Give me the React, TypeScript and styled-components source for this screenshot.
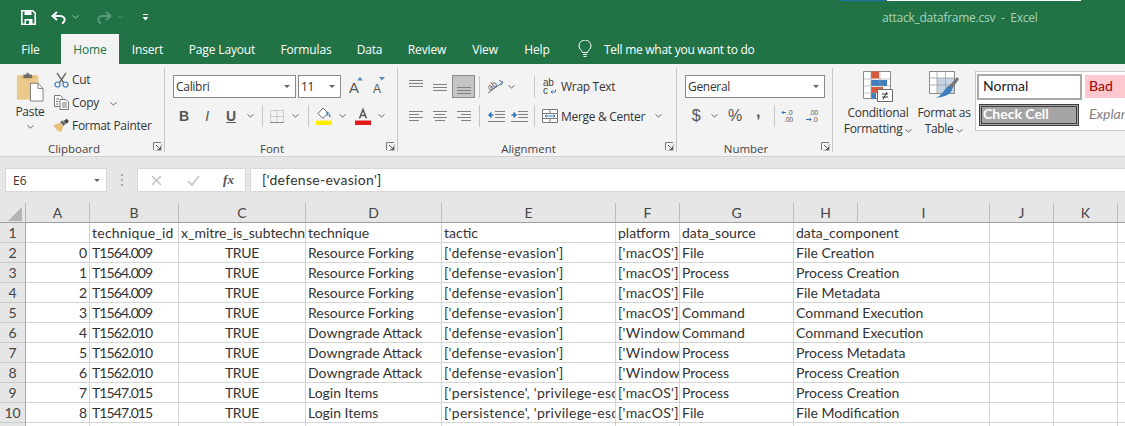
import React from 'react';
import styled, { createGlobalStyle } from 'styled-components';

const UI_FONT = '"Open Sans", "Noto Sans", sans-serif';
const CELL_FONT = 'Lato, "Liberation Sans", sans-serif';

const GlobalStyle = createGlobalStyle`
  html, body { margin: 0; padding: 0; background: #fff; }
  body { font-family: ${UI_FONT}; }
`;

const Page = styled.div`
  width: 1125px;
  height: 426px;
  overflow: hidden;
  display: flex;
  flex-direction: column;
`;

/* title bar */
const TitleBar = styled.div`
  position: relative;
  height: 34px;
  flex: none;
  background: #217346;
  display: flex;
  align-items: center;
`;

const Qat = styled.div`
  display: flex;
  align-items: center;
  width: 882px;
  padding-left: 21px;
  box-sizing: border-box;
`;

const QatSlot = styled.div<{ $w: number }>`
  width: ${(p) => p.$w}px;
  display: flex;
  align-items: center;
  justify-content: center;
`;

const WindowTitle = styled.div`
  color: #a8d4bb;
  font-size: 12px;
  letter-spacing: -0.25px;
  white-space: pre;
`;

const TopStrip = styled.div`
  position: absolute;
  left: 840px;
  top: 0;
  width: 241px;
  height: 1px;
  background: linear-gradient(to right, #1d6fa8 0 47px, #fff 47px);
`;

/* tabs */
const TabBar = styled.div`
  height: 30px;
  flex: none;
  background: #217346;
  display: flex;
  align-items: stretch;
  letter-spacing: -0.15px;
`;

const Tab = styled.div<{ $w: number; $active?: boolean }>`
  width: ${(p) => p.$w}px;
  display: flex;
  align-items: center;
  justify-content: center;
  font-size: 12px;
  color: ${(p) => (p.$active ? '#217346' : '#fff')};
  background: ${(p) => (p.$active ? '#f3f3f3' : 'transparent')};
`;

const TellMe = styled.div`
  display: flex;
  align-items: center;
  gap: 12px;
  margin-left: 15px;
  color: #fff;
  font-size: 12px;
  letter-spacing: -0.27px;
`;

/* ribbon */
const Ribbon = styled.div`
  height: 93px;
  flex: none;
  box-sizing: border-box;
  background: #f3f3f3;
  border-bottom: 1px solid #d2d2d2;
  display: flex;
  align-items: flex-start;
  overflow: hidden;
  font-size: 12px;
  letter-spacing: -0.3px;
  color: #333;
`;

const Group = styled.div<{ $w: number; $last?: boolean }>`
  position: relative;
  flex: none;
  width: ${(p) => p.$w}px;
  height: 84px;
  margin-top: 4px;
  box-sizing: border-box;
  border-right: ${(p) => (p.$last ? 'none' : '1px solid #c6c6c6')};
  display: flex;
  flex-direction: column;
`;

const GroupBody = styled.div<{ $left: number }>`
  height: 73px;
  box-sizing: border-box;
  padding: 7px 0 0 ${(p) => p.$left}px;
  display: flex;
  flex-direction: column;
`;

const ClipboardBody = styled.div`
  height: 73px;
  box-sizing: border-box;
  padding-left: 8px;
  display: flex;
  align-items: flex-start;
`;

const GroupLabel = styled.div<{ $w: number }>`
  height: 11px;
  line-height: 15px;
  text-align: center;
  font-size: 11.5px;
  letter-spacing: 0;
  color: #444;
  width: ${(p) => p.$w}px;
`;

const Launcher = styled.div`
  position: absolute;
  right: 2px;
  bottom: 1px;
  width: 9px;
  height: 9px;
  display: flex;
`;

const Row = styled.div<{ $top?: number }>`
  display: flex;
  align-items: center;
  height: ${(p) => (p.$top ? 22 : 23)}px;
  margin-top: ${(p) => p.$top ?? 0}px;
`;

const Slot = styled.div<{ $w: number; $active?: boolean }>`
  flex: none;
  width: ${(p) => p.$w}px;
  height: 100%;
  display: flex;
  align-items: center;
  justify-content: center;
  box-sizing: border-box;
  background: ${(p) => (p.$active ? '#c4c4c4' : 'transparent')};
  border: ${(p) => (p.$active ? '1px solid #8c8c8c' : 'none')};
`;

const Glyph = styled.span<{ $size: number; $bold?: boolean; $italic?: boolean; $under?: boolean; $lift?: number }>`
  font-family: "Liberation Sans", sans-serif;
  font-size: ${(p) => p.$size}px;
  font-weight: ${(p) => (p.$bold ? 700 : 400)};
  font-style: ${(p) => (p.$italic ? 'italic' : 'normal')};
  text-decoration: ${(p) => (p.$under ? 'underline' : 'none')};
  color: #555;
  line-height: 1;
  transform: translateY(${(p) => -(p.$lift ?? 0)}px);
`;

const FontSizeButton = styled.div`
  flex: none;
  width: 16px;
  height: 100%;
  display: flex;
  align-items: flex-end;
  padding-bottom: 3px;
  box-sizing: border-box;
`;

const FontSizeArrow = styled.svg`
  flex: none;
  align-self: flex-start;
  margin: 2px 0 0 -2px;
`;

const Divider = styled.div<{ $l: number; $r: number; $h?: number }>`
  flex: none;
  width: 1px;
  height: ${(p) => p.$h ?? 22}px;
  margin: 0 ${(p) => p.$r}px 0 ${(p) => p.$l}px;
  background: #c6c6c6;
`;

const Combo = styled.div<{ $w: number }>`
  flex: none;
  width: ${(p) => p.$w}px;
  height: 23px;
  box-sizing: border-box;
  border: 1px solid #8a8a8a;
  background: #fff;
  display: flex;
  align-items: center;
  justify-content: space-between;
  padding: 0 5px 0 2px;
  font-size: 12px;
  color: #333;
`;

const Caret = styled.span`
  width: 0;
  height: 0;
  border-left: 3px solid transparent;
  border-right: 3px solid transparent;
  border-top: 3px solid #666;
`;

const PasteButton = styled.div`
  flex: none;
  width: 44px;
  display: flex;
  flex-direction: column;
  align-items: center;
  padding-top: 4px;
`;

const PasteText = styled.div`
  margin: 1px 0 5px;
  line-height: 16px;
`;

const Commands = styled.div`
  display: flex;
  flex-direction: column;
  margin-left: 1px;
`;

const Command = styled.div`
  height: 23px;
  display: flex;
  align-items: center;
  white-space: nowrap;
`;

const CommandIcon = styled.div`
  width: 16px;
  margin-right: 3px;
  display: flex;
  justify-content: center;
`;

const ChevronBox = styled.span<{ $l: number }>`
  display: inline-flex;
  margin-left: ${(p) => p.$l}px;
`;

const CopyChevron = styled(ChevronBox)`
  transform: translateY(1px);
`;

const TextCommand = styled.span`
  margin-left: 3px;
  white-space: nowrap;
`;

const StyleRow = styled.div`
  display: flex;
  align-items: flex-start;
  height: 100%;
`;

const BigButton = styled.div<{ $w: number; $l: number }>`
  flex: none;
  width: ${(p) => p.$w}px;
  margin-left: ${(p) => p.$l}px;
  display: flex;
  flex-direction: column;
  align-items: center;
  padding-top: 3px;
  white-space: nowrap;
  line-height: 16px;
`;

const BigIcon = styled.div`
  height: 33px;
  margin-bottom: 1px;
`;

const Gallery = styled.div`
  flex: none;
  width: 170px;
  height: 60px;
  margin: 3px 0 0 5px;
  box-sizing: border-box;
  background: #fff;
  border: 1px solid #c8c8c8;
  display: grid;
  grid-template-columns: 109px 1fr;
  grid-template-rows: 29px 29px;
  font-family: ${CELL_FONT};
  font-size: 14px;
  letter-spacing: 0;
`;

const NormalStyle = styled.div`
  margin: 2px 3px 1px 1px;
  box-sizing: border-box;
  border: 2px solid #a8a8a8;
  padding: 0 0 3px 4px;
  display: flex;
  align-items: center;
  color: #222;
`;

const BadStyle = styled.div`
  margin: 3px 0;
  background: #ffc7ce;
  color: #9c0006;
  padding: 0 0 2px 4px;
  display: flex;
  align-items: center;
`;

const CheckStyle = styled.div`
  margin: 3px 6px 4px 3px;
  background: #a5a5a5;
  border: 3px double #3f3f3f;
  color: #fff;
  font-weight: 700;
  padding: 0 0 3px 1px;
  display: flex;
  align-items: center;
`;

const ExplainStyle = styled.div`
  color: #7f7f7f;
  font-style: italic;
  padding: 0 0 4px 4px;
  display: flex;
  align-items: center;
`;

/* formula bar */
const FormulaBar = styled.div`
  height: 46px;
  flex: none;
  box-sizing: border-box;
  background: #e6e6e6;
  padding: 11px 0 0 5px;
  display: flex;
  align-items: flex-start;
`;

const WhiteBox = styled.div<{ $w?: number }>`
  height: 24px;
  box-sizing: border-box;
  background: #fff;
  border: 1px solid #d8d8d8;
  display: flex;
  align-items: center;
  flex: ${(p) => (p.$w ? 'none' : 1)};
  width: ${(p) => (p.$w ? `${p.$w}px` : 'auto')};
`;

const NameBox = styled(WhiteBox)`
  justify-content: space-between;
  padding: 0 6px 0 7px;
  font-family: ${UI_FONT};
  font-size: 12px;
  color: #333;
`;

const Grip = styled.div`
  flex: none;
  width: 30px;
  display: flex;
  flex-direction: column;
  align-items: center;
  gap: 3px;
  padding-top: 6px;
`;

const GripDot = styled.span`
  width: 2px;
  height: 2px;
  background: #a8a8a8;
`;

const FormulaButtons = styled(WhiteBox)`
  margin-right: 4px;
`;

const FormulaSlot = styled.div<{ $w: number }>`
  width: ${(p) => p.$w}px;
  display: flex;
  justify-content: center;
  align-items: center;
`;

const Fx = styled.span`
  font-family: "Liberation Serif", serif;
  font-style: italic;
  font-weight: 700;
  font-size: 13px;
  color: #555;
`;

const FormulaInput = styled(WhiteBox)`
  padding: 0 0 2px 11px;
  font-family: ${CELL_FONT};
  font-size: 14px;
  letter-spacing: 0.3px;
  color: #333;
  border-right: none;
`;

/* sheet */
const COLUMNS = [26, 64, 89, 127, 136, 174, 64, 114, 64, 132, 64, 64, 64];

const Sheet = styled.div`
  display: grid;
  grid-template-columns: ${COLUMNS.map((c) => `${c}px`).join(' ')};
  grid-auto-rows: 20px;
  font-family: ${CELL_FONT};
  font-size: 14px;
  color: #333;
  background: #fff;
`;

const Corner = styled.div`
  background: #e6e6e6;
  border-right: 1px solid #b4b4b4;
  border-bottom: 1px solid #a0a0a0;
  box-sizing: border-box;
  display: flex;
  align-items: flex-end;
  justify-content: flex-end;
  padding: 0 3px 1px 0;
`;

const ColHead = styled.div`
  background: #e6e6e6;
  border-right: 1px solid #bcbcbc;
  border-bottom: 1px solid #a0a0a0;
  box-sizing: border-box;
  text-align: center;
  line-height: 19px;
  color: #444;
`;

const RowHead = styled.div`
  background: #e6e6e6;
  border-right: 1px solid #a8a8a8;
  border-bottom: 1px solid #c8c8c8;
  box-sizing: border-box;
  text-align: center;
  line-height: 19px;
  color: #444;
`;

const Cell = styled.div<{ $align: string; $open?: boolean; $track: number }>`
  box-sizing: border-box;
  border-right: ${(p) => (p.$open ? 'none' : '1px solid #d4d4d4')};
  border-bottom: 1px solid #d4d4d4;
  padding: 0 2px;
  line-height: 19px;
  white-space: nowrap;
  overflow: ${(p) => (p.$open ? 'visible' : 'hidden')};
  text-align: ${(p) => p.$align};
  letter-spacing: ${(p) => p.$track}px;
`;

/* icons */
const Chevron = ({ color = '#666' }: { color?: string }) => (
  <svg width="7" height="4" viewBox="0 0 7 4">
    <path d="M.5.5 3.5 3 6.5.5" fill="none" stroke={color} strokeWidth="1" />
  </svg>
);

const SaveIcon = () => (
  <svg width="15" height="15" viewBox="0 0 15 15">
    <path d="M.8.8h11l2.4 2.4v11H.8z" fill="none" stroke="#fff" strokeWidth="1.6" />
    <path d="M3.5 1v4h7V1zM3.5 9h8v5h-8z" fill="#fff" />
    <path d="M5 10.5h3v3.5h-3z" fill="#217346" />
  </svg>
);

const UndoIcon = ({ color }: { color: string }) => (
  <svg width="15" height="13" viewBox="0 0 15 13">
    <path d="M6 1 1.5 5 6 9" fill="none" stroke={color} strokeWidth="2" />
    <path d="M2 5h7c4 0 5 2.500 4.500 4.500C13 11 12 12 11 12.500" fill="none" stroke={color} strokeWidth="2" />
  </svg>
);

const RedoIcon = ({ color }: { color: string }) => (
  <svg width="15" height="13" viewBox="0 0 15 13">
    <path d="M9 1l4.500 4L9 9" fill="none" stroke={color} strokeWidth="2" />
    <path d="M13 5H6C2 5 1 7.500 1.500 9.500 2 11 3 12 4 12.500" fill="none" stroke={color} strokeWidth="2" />
  </svg>
);

const CustomizeIcon = () => (
  <svg width="7" height="7" viewBox="0 0 7 7">
    <path d="M1 0h5v1H1z" fill="#fff" />
    <path d="M.5 3h6L3.500 6.500z" fill="#fff" />
  </svg>
);

const BulbIcon = () => (
  <svg width="14" height="18" viewBox="0 0 14 18">
    <path d="M4.500 12.500C4 10 1 9 1 6a6 6 0 0 1 12 0c0 3-3 4-3.500 6.500z" fill="none" stroke="#fff" />
    <path d="M5 14.500h4M5.500 16.500h3" stroke="#fff" />
  </svg>
);

const PasteIcon = () => (
  <svg width="28" height="31" viewBox="0 0 30 32">
    <path d="M1 3h23v26H1z" fill="#eac98a" />
    <path d="M8 2h3c0-2.500 3-2.500 3 0h3v4H8z" fill="#6b6b6b" />
    <path d="M4 3.500h3v3h11v-3h3" fill="none" stroke="#dcb26a" />
    <path d="M15.500 11.500h8l5.500 5.500v13.500H15.500z" fill="#fff" stroke="#7a7a7a" />
    <path d="M23.500 11.500V17H29" fill="none" stroke="#7a7a7a" />
  </svg>
);

const CutIcon = () => (
  <svg width="15" height="16" viewBox="0 0 15 16">
    <path d="M3 1l6.500 9.500M12 1 5.500 10.500" stroke="#6d6d6d" strokeWidth="1.400" fill="none" />
    <circle cx="3.500" cy="12.500" r="2.500" fill="none" stroke="#3f7fbf" strokeWidth="1.200" />
    <circle cx="11.500" cy="12.500" r="2.500" fill="none" stroke="#3f7fbf" strokeWidth="1.200" />
  </svg>
);

const CopyIcon = () => (
  <svg width="15" height="15" viewBox="0 0 15 15">
    <path d="M.5.5h6l2 2v9h-8z" fill="#fff" stroke="#777" />
    <path d="M6 4.500h6l2.500 2.500v7.500H6z" fill="#fff" stroke="#777" />
    <path d="M2 4h3M2 6.500h2.500M2 9h2.500M8 8h5M8 10h5M8 12h5" stroke="#777" />
  </svg>
);

const PainterIcon = () => (
  <svg width="18" height="15" viewBox="0 0 18 15">
    <path d="M0 7.500 5 13l4.500 2 2-6.500-4-4z" fill="#e8c27c" />
    <path d="M8 4l4 4 2.500-2.500-4-4z" fill="#6a6a6a" />
    <path d="M12 2.500 15.500 0 18 3l-3 2.500z" fill="#444" />
  </svg>
);

const LauncherIcon = () => (
  <svg width="9" height="9" viewBox="0 0 9 9">
    <path d="M.5 8V.5H8" fill="none" stroke="#7a7a7a" />
    <path d="M3 3l4 4M7.500 4.500v3h-3" fill="none" stroke="#555" />
    <path d="M2 8.500h6.500V2" fill="none" stroke="#bbb" />
  </svg>
);

const FontSizeIcon = ({ up }: { up: boolean }) => (
  <FontSizeButton>
    <Glyph $size={up ? 15 : 12}>A</Glyph>
    <FontSizeArrow width="6" height="4" viewBox="0 0 6 4">
      <path d={up ? 'M0 3.500 3 0l3 3.500z' : 'M0 0h6L3 3.500z'} fill="#5a8bbf" />
    </FontSizeArrow>
  </FontSizeButton>
);

const BordersIcon = () => (
  <svg width="14" height="13" viewBox="0 0 14 13">
    <path d="M.5.500h13v12h-13zM7 .5v12M.5 6.500h13" fill="none" stroke="#a8a8a8" strokeDasharray="1 1" />
    <path d="M0 12.500h14" stroke="#888" />
  </svg>
);

const FillIcon = () => (
  <svg width="16" height="18" viewBox="0 0 16 18">
    <path d="M7 1 2 6.500l5 5 5-5.500z" fill="#fff" stroke="#666" />
    <path d="M13 6c1 2 2 3 1.500 4s-2.500 0-1.500-4z" fill="#4c7fb8" />
    <path d="M10 4l3 2-2 3z" fill="#4c7fb8" />
    <path d="M0 13.500h16V18H0z" fill="#ffee00" />
  </svg>
);

const FontColorIcon = () => (
  <svg width="16" height="17" viewBox="0 0 16 17">
    <path d="M4.500 10.500 8 1.500l3.500 9M5.700 7.500h4.600" fill="none" stroke="#555" strokeWidth="1.500" />
    <path d="M0 12.500h16V17H0z" fill="#e31b1b" />
  </svg>
);

const Lines = ({ kind }: { kind: 'left' | 'center' | 'right' }) => {
  const rows = [0, 3, 6, 9];
  const span = (i: number) => {
    const short = i % 2 === 1 ? 10 : 14;
    if (kind === 'left') return [0, short];
    if (kind === 'right') return [14 - short, 14];
    return [(14 - short) / 2, (14 + short) / 2];
  };
  return (
    <svg width="14" height="11" viewBox="0 0 14 11">
      {rows.map((r, i) => (
        <path key={r} d={`M${span(i)[0]} ${r + 0.5}H${span(i)[1]}`} stroke="#808080" />
      ))}
    </svg>
  );
};

const VAlignIcon = ({ top }: { top: number }) => (
  <svg width="14" height="14" viewBox="0 0 14 14">
    {[0, 3, 6].map((r) => (
      <path key={r} d={`M0 ${top + r + 0.5}H14`} stroke="#808080" />
    ))}
  </svg>
);

const OrientationIcon = () => (
  <svg width="17" height="15" viewBox="0 0 17 15" overflow="visible">
    <path d="M1 14 16 3" stroke="#707070" />
    <path d="M12 1.500l4 1.500-2 3.500" fill="none" stroke="#4c7fb8" />
    <text x="1" y="10" fontSize="9" fontFamily="Liberation Sans, sans-serif" fill="#555" transform="rotate(-35 5 8)">ab</text>
  </svg>
);

const IndentIcon = ({ out }: { out: boolean }) => (
  <svg width="17" height="13" viewBox="0 0 17 13">
    <path d="M7 1.500h10M7 4.500h10M7 7.500h10M0 11.500h17" stroke="#808080" />
    <path d={out ? 'M5.500 5H1.500M3.500 2.500 1 5l2.500 2.500' : 'M.5 5h4M2.500 2.500 5 5 2.500 7.500'} fill="none" stroke="#2f73b8" strokeWidth="1.500" />
  </svg>
);

const WrapIcon = () => (
  <svg width="14" height="17" viewBox="0 0 14 17" overflow="visible">
    <text x="0" y="8" fontSize="10" fontFamily="Liberation Sans, sans-serif" fill="#444">ab</text>
    <text x="0" y="16" fontSize="10" fontFamily="Liberation Sans, sans-serif" fill="#444">c</text>
    <path d="M12.500 11.500v2.500H8M9.500 12.500 8 14l1.500 1.500" fill="none" stroke="#2f73b8" />
  </svg>
);

const MergeIcon = () => (
  <svg width="16" height="14" viewBox="0 0 16 14">
    <path d="M.5.500h15v13H.5zM.5 4.500h15M.5 9.500h15M8 .5v4M8 9.500v4" fill="#fff" stroke="#7a7a7a" />
    <path d="M3 7h10M4.500 5.500 3 7l1.500 1.500M11.500 5.500 13 7l-1.500 1.500" fill="none" stroke="#2f73b8" />
  </svg>
);

const DecimalIcon = ({ more }: { more: boolean }) => (
  <svg width="16" height="14" viewBox="0 0 16 14" overflow="visible">
    <text x={more ? 6 : 4} y="6" fontSize="7" fontFamily="Liberation Sans, sans-serif" fill="#555">{more ? '.0' : '.00'}</text>
    <text x={more ? 3 : 7} y="13" fontSize="7" fontFamily="Liberation Sans, sans-serif" fill="#555">{more ? '.00' : '.0'}</text>
    <path d={more ? 'M5 3.500H1M2.500 2 1 3.500 2.500 5' : 'M1 10.500h5M4.500 9 6 10.500 4.500 12'} fill="none" stroke="#2f73b8" />
  </svg>
);

const CondFormatIcon = () => (
  <svg width="30" height="31" viewBox="0 0 30 31">
    <path d="M.5.500h27v27H.5z" fill="#fff" stroke="#8a8a8a" />
    <path d="M8 .5h8v7H8z" fill="#d9583b" />
    <path d="M8 9h16v6H8z" fill="#3f7fbf" />
    <path d="M8 16h12v6H8z" fill="#d9583b" />
    <path d="M8 22h5v6H8z" fill="#3f7fbf" />
    <path d="M8 .5v27M17 .5v27M.5 8h27M.5 15h27M.5 22h27" stroke="#a0a0a0" fill="none" strokeWidth=".6" />
    <path d="M14.500 18.500h15v12h-15z" fill="#fff" stroke="#6a6a6a" />
    <path d="M19 23h6M19 26h6M24 21l-4 7.500" stroke="#333" fill="none" />
  </svg>
);

const FormatTableIcon = () => (
  <svg width="30" height="31" viewBox="0 0 30 31">
    <path d="M.5.500h25v22H.5z" fill="#fff" stroke="#8a8a8a" />
    <path d="M8 7h17v15H8z" fill="#c8d4e4" />
    <path d="M.5 7h25M.5 14h25M8 .5v22M16.500 .5v22" stroke="#a0a0a0" fill="none" strokeWidth=".8" />
    <path d="M20 15 28 6l2 2-7 10z" fill="#777" />
    <path d="M19 15c3 0 5 2 4 4 -2 5-8 7-16 8 6-3 8-8 12-12z" fill="#3f7fbf" />
  </svg>
);

const CrossIcon = () => (
  <svg width="11" height="11" viewBox="0 0 11 11">
    <path d="M1 1l9 9M10 1l-9 9" stroke="#c4c4c4" strokeWidth="1.600" />
  </svg>
);

const CheckIcon = () => (
  <svg width="13" height="11" viewBox="0 0 13 11">
    <path d="M1 6l4 4 7-9" stroke="#c4c4c4" strokeWidth="1.600" fill="none" />
  </svg>
);

const CornerTriangle = () => (
  <svg width="14" height="14" viewBox="0 0 14 14">
    <path d="M14 0v14H0z" fill="#b4b4b4" />
  </svg>
);

const TABS: [string, number, boolean?][] = [
  ['File', 61],
  ['Home', 58, true],
  ['Insert', 57],
  ['Page Layout', 92],
  ['Formulas', 76],
  ['Data', 51],
  ['Review', 64],
  ['View', 52],
  ['Help', 52],
];

const HEADS = ['A', 'B', 'C', 'D', 'E', 'F', 'G', 'H', 'I', 'J', 'K', 'L'];

const DE = "['defense-evasion']";
const PE = "['persistence', 'privilege-esc";
const MAC = "['macOS']";
const WIN = "['Window";

const ROWS: string[][] = [
  ['', 'technique_id', 'x_mitre_is_subtechni', 'technique', 'tactic', 'platform', 'data_source', 'data_component'],
  ['0', 'T1564.009', 'TRUE', 'Resource Forking', DE, MAC, 'File', 'File Creation'],
  ['1', 'T1564.009', 'TRUE', 'Resource Forking', DE, MAC, 'Process', 'Process Creation'],
  ['2', 'T1564.009', 'TRUE', 'Resource Forking', DE, MAC, 'File', 'File Metadata'],
  ['3', 'T1564.009', 'TRUE', 'Resource Forking', DE, MAC, 'Command', 'Command Execution'],
  ['4', 'T1562.010', 'TRUE', 'Downgrade Attack', DE, WIN, 'Command', 'Command Execution'],
  ['5', 'T1562.010', 'TRUE', 'Downgrade Attack', DE, WIN, 'Process', 'Process Metadata'],
  ['6', 'T1562.010', 'TRUE', 'Downgrade Attack', DE, WIN, 'Process', 'Process Creation'],
  ['7', 'T1547.015', 'TRUE', 'Login Items', PE, MAC, 'Process', 'Process Creation'],
  ['8', 'T1547.015', 'TRUE', 'Login Items', PE, MAC, 'File', 'File Modification'],
  ['', '', '', '', '', '', '', ''],
];

const cellAlign = (col: number, row: number) => {
  if (row === 0) return 'left';
  if (col === 0) return 'right';
  if (col === 2) return 'center';
  return 'left';
};

// Lato runs wider on digits and narrower on punctuation than the sheet's font
const cellTrack = (value: string) => {
  if (/^T\d/.test(value)) return -0.9;
  if (value.startsWith("['")) return 0.3;
  if (value === 'technique_id') return 0.25;
  if (value === 'TRUE') return -0.3;
  return 0;
};

const App: React.FC = () => (
  <Page>
    <GlobalStyle />
    <TitleBar>
      <TopStrip />
      <Qat>
        <QatSlot $w={15}><SaveIcon /></QatSlot>
        <QatSlot $w={15} />
        <QatSlot $w={15}><UndoIcon color="#fff" /></QatSlot>
        <QatSlot $w={18}><Chevron color="#9cc7af" /></QatSlot>
        <QatSlot $w={13} />
        <QatSlot $w={15}><RedoIcon color="#5a9a78" /></QatSlot>
        <QatSlot $w={16}><Chevron color="#5a9a78" /></QatSlot>
        <QatSlot $w={6} />
        <QatSlot $w={22}><CustomizeIcon /></QatSlot>
      </Qat>
      <WindowTitle>attack_dataframe.csv  -  Excel</WindowTitle>
    </TitleBar>

    <TabBar>
      {TABS.map(([name, w, active]) => (
        <Tab key={name} $w={w} $active={active}>{name}</Tab>
      ))}
      <TellMe>
        <BulbIcon />
        Tell me what you want to do
      </TellMe>
    </TabBar>

    <Ribbon>
      <Group $w={165}>
        <ClipboardBody>
          <PasteButton>
            <PasteIcon />
            <PasteText>Paste</PasteText>
            <Chevron />
          </PasteButton>
          <Commands>
            <Command><CommandIcon><CutIcon /></CommandIcon>Cut</Command>
            <Command>
              <CommandIcon><CopyIcon /></CommandIcon>Copy
              <CopyChevron $l={11}><Chevron /></CopyChevron>
            </Command>
            <Command><CommandIcon><PainterIcon /></CommandIcon>Format Painter</Command>
          </Commands>
        </ClipboardBody>
        <GroupLabel $w={148}>Clipboard</GroupLabel>
        <Launcher><LauncherIcon /></Launcher>
      </Group>

      <Group $w={233}>
        <GroupBody $left={8}>
          <Row>
            <Combo $w={123}>Calibri<Caret /></Combo>
            <Slot $w={2} />
            <Combo $w={43}>11<Caret /></Combo>
            <Slot $w={8} />
            <FontSizeIcon up />
            <Slot $w={8} />
            <FontSizeIcon up={false} />
          </Row>
          <Row $top={7}>
            <Slot $w={22}><Glyph $size={14} $bold>B</Glyph></Slot>
            <Slot $w={24}><Glyph $size={14} $italic>I</Glyph></Slot>
            <Slot $w={24}><Glyph $size={14} $bold $under>U</Glyph></Slot>
            <Slot $w={14}><Chevron /></Slot>
            <Divider $l={5} $r={5} />
            <Slot $w={18}><BordersIcon /></Slot>
            <Slot $w={18}><Chevron /></Slot>
            <Divider $l={4} $r={7} />
            <Slot $w={16}><FillIcon /></Slot>
            <Slot $w={20}><Chevron /></Slot>
            <Slot $w={22}><FontColorIcon /></Slot>
            <Slot $w={14}><Chevron /></Slot>
          </Row>
        </GroupBody>
        <GroupLabel $w={214}>Font</GroupLabel>
        <Launcher><LauncherIcon /></Launcher>
      </Group>

      <Group $w={279}>
        <GroupBody $left={6}>
          <Row>
            <Slot $w={24}><VAlignIcon top={0} /></Slot>
            <Slot $w={24}><VAlignIcon top={4} /></Slot>
            <Slot $w={23} $active><VAlignIcon top={7} /></Slot>
            <Slot $w={1} />
            <Divider $l={3} $r={5} />
            <Slot $w={20}><OrientationIcon /></Slot>
            <Slot $w={12}><Chevron /></Slot>
            <Divider $l={17} $r={7} />
            <Slot $w={16}><WrapIcon /></Slot>
            <TextCommand>Wrap Text</TextCommand>
          </Row>
          <Row $top={7}>
            <Slot $w={24}><Lines kind="left" /></Slot>
            <Slot $w={24}><Lines kind="center" /></Slot>
            <Slot $w={24}><Lines kind="right" /></Slot>
            <Divider $l={3} $r={5} />
            <Slot $w={22}><IndentIcon out /></Slot>
            <Slot $w={24}><IndentIcon out={false} /></Slot>
            <Divider $l={3} $r={7} />
            <Slot $w={16}><MergeIcon /></Slot>
            <TextCommand>Merge &amp; Center</TextCommand>
            <ChevronBox $l={10}><Chevron /></ChevronBox>
          </Row>
        </GroupBody>
        <GroupLabel $w={261}>Alignment</GroupLabel>
        <Launcher><LauncherIcon /></Launcher>
      </Group>

      <Group $w={156}>
        <GroupBody $left={8}>
          <Row>
            <Combo $w={140}>General<Caret /></Combo>
          </Row>
          <Row $top={7}>
            <Slot $w={22}><Glyph $size={16}>$</Glyph></Slot>
            <Slot $w={14}><Chevron /></Slot>
            <Slot $w={28}><Glyph $size={16}>%</Glyph></Slot>
            <Slot $w={18}><Glyph $size={16} $bold $lift={4}>,</Glyph></Slot>
            <Divider $l={7} $r={4} />
            <Slot $w={20}><DecimalIcon more /></Slot>
            <Slot $w={28}><DecimalIcon more={false} /></Slot>
          </Row>
        </GroupBody>
        <GroupLabel $w={138}>Number</GroupLabel>
        <Launcher><LauncherIcon /></Launcher>
      </Group>

      <Group $w={292} $last>
        <StyleRow>
          <BigButton $w={78} $l={6}>
            <BigIcon><CondFormatIcon /></BigIcon>
            Conditional
            <span>Formatting <Chevron /></span>
          </BigButton>
          <BigButton $w={52} $l={1}>
            <BigIcon><FormatTableIcon /></BigIcon>
            Format as
            <span>Table <Chevron /></span>
          </BigButton>
          <Gallery>
            <NormalStyle>Normal</NormalStyle>
            <BadStyle>Bad</BadStyle>
            <CheckStyle>Check Cell</CheckStyle>
            <ExplainStyle>Explanatory...</ExplainStyle>
          </Gallery>
        </StyleRow>
      </Group>
    </Ribbon>

    <FormulaBar>
      <NameBox $w={102}>E6<Caret /></NameBox>
      <Grip><GripDot /><GripDot /><GripDot /></Grip>
      <FormulaButtons $w={109}>
        <FormulaSlot $w={37}><CrossIcon /></FormulaSlot>
        <FormulaSlot $w={37}><CheckIcon /></FormulaSlot>
        <FormulaSlot $w={33}><Fx>fx</Fx></FormulaSlot>
      </FormulaButtons>
      <FormulaInput>['defense-evasion']</FormulaInput>
    </FormulaBar>

    <Sheet>
      <Corner><CornerTriangle /></Corner>
      {HEADS.map((h) => <ColHead key={h}>{h}</ColHead>)}
      {ROWS.map((row, r) => (
        <React.Fragment key={r}>
          <RowHead>{r + 1}</RowHead>
          {HEADS.map((_, c) => (
            <Cell key={c} $align={cellAlign(c, r)} $open={c === 7} $track={cellTrack(row[c] ?? '')}>{row[c] ?? ''}</Cell>
          ))}
        </React.Fragment>
      ))}
    </Sheet>
  </Page>
);

export default App;
